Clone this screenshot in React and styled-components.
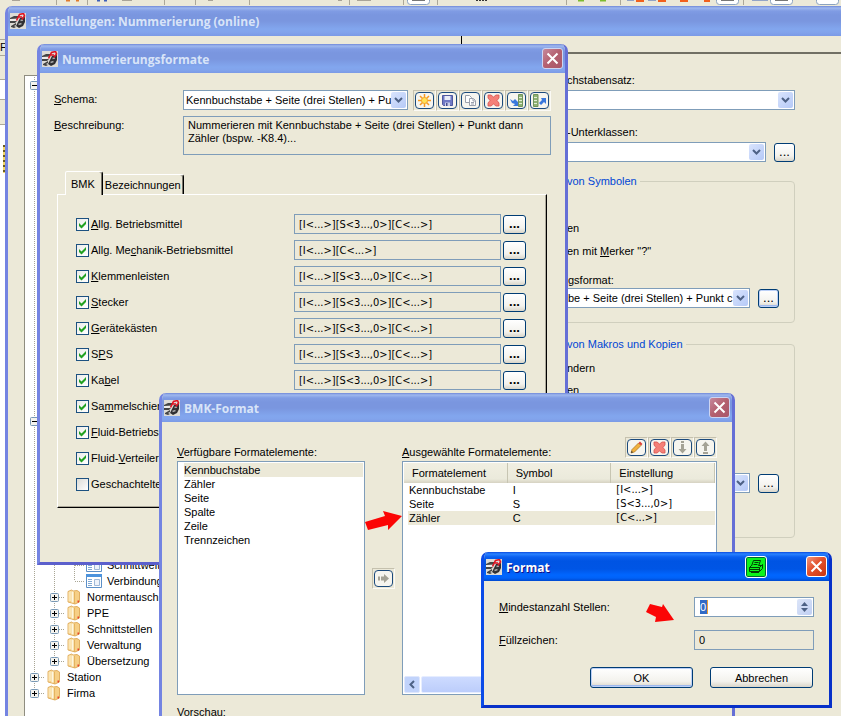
import React from "react"
import styled, { createGlobalStyle, css } from "styled-components"

const face = "#ece9d8"
const ink = "#000"
const fieldBorder = "#7f9db9"
const codeFont = `"DejaVu Sans Condensed", "Liberation Sans", sans-serif`

const GlobalStyle = createGlobalStyle`
  * { box-sizing: border-box; }
  html, body, #root { height: 100%; }
  body {
    margin: 0; overflow: hidden;
    background: ${face};
  }
  body, button, input, select, textarea {
    font-family: "Liberation Sans", Arial, sans-serif;
    font-size: 11px; line-height: 14px; color: ${ink};
  }
`

/* ---------- desktop and the application behind the dialogs ---------- */

const Desktop = styled.div`
  position: relative;
  height: 100vh;
  overflow: hidden;
  background: ${face};
`

const BackToolbar = styled.div`
  height: 6px;
  overflow: hidden;
  svg { display: block; }
`

const BackEdge = styled.div`
  display: flex; flex-direction: column;
  width: 6px; height: 100%;
  overflow: hidden;
`

const EdgePiece = styled.div`
  flex: none;
  height: ${props => props.$height}px;
  border-bottom: 1px solid #aca899;
  background: ${props => props.$bg || face};
  white-space: nowrap;
`

const EdgeCanvas = styled.div`
  flex: 1;
  padding: 20px 0 0 3px;
  background: #fff;
  &::before {
    content: ""; display: block;
    width: 3px; height: 28px;
    background: repeating-linear-gradient(#6b5c22 0 2px, #f3d766 2px 5px);
  }
`

/* ---------- windows ---------- */

const WindowFrame = styled.section`
  position: absolute;
  display: flex; flex-direction: column;
  overflow: hidden;
  background: ${face};
  border: 3px solid;
  border-color: ${props => (props.$active ? "#0a46de #0831c9 #0831c9 #0a4be8" : "#6f80de #656fd6 #5c60cc #7484e2")};
  border-top: 0;
  border-radius: 7px 7px 0 0;
`

const MainFrame = styled(WindowFrame)`
  top: 6px; left: 5px; right: 0; bottom: 0;
  border-right: 0; border-bottom: 0;
  border-radius: 7px 0 0 0;
`

const SchemeFrame = styled(WindowFrame)`
  top: 44px; left: 37px;
  width: 531px;
`

const PartsFrame = styled(WindowFrame)`
  top: 393px; left: 159px; bottom: 0;
  width: 576px;
  border-bottom: 0;
`

const FormatFrame = styled(WindowFrame)`
  top: 552px; left: 481px;
  width: 351px;
`

const TitleBar = styled.header`
  display: flex; align-items: center;
  flex: none;
  height: ${props => (props.$tall ? 30 : 29)}px;
  margin: 0 -3px;
  padding: 0 5px;
  background: ${props =>
    props.$active
      ? "linear-gradient(#0a4be0 0, #2a82ff 2px, #0a5ff0 5px, #0054e3 9px, #0055e5 17px, #0066ff 23px, #0062f8 26px, #0049cf 100%)"
      : "linear-gradient(#7088d8 0, #9fb8ee 2px, #809ce4 5px, #7a96df 9px, #7a96df 15px, #82a6ee 23px, #82a4ec 26px, #7b9ae6 100%)"};
`

const Title = styled.h1`
  flex: 1;
  margin: 2px 0 0 4px;
  font: bold 12px/16px "Open Sans", "Noto Sans", sans-serif;
  color: ${props => (props.$active ? "#fff" : "#d8e4f8")};
  text-shadow: ${props => (props.$active ? "1px 1px 0 #0f1089" : "none")};
  white-space: nowrap;
`

const CloseButton = styled.button`
  display: flex; align-items: center; justify-content: center;
  width: 21px; height: 21px;
  padding: 0;
  border: 1px solid #fff;
  border-radius: 3px;
  background: ${props =>
    props.$active
      ? "linear-gradient(135deg, #f0967c, #e2512d 45%, #c9360f)"
      : "linear-gradient(135deg, #c6899c, #b4606f 50%, #a9566a)"};
  ${props => !props.$active && css`border-color: #cdd5f2;`}
`

const PrintButton = styled.button`
  display: flex; align-items: center; justify-content: center;
  width: 22px; height: 22px;
  margin-right: 39px;
  padding: 0;
  border: 1px solid #fff;
  border-radius: 3px;
  background: #0cf31c;
  box-shadow: inset 0 0 0 1px #063;
`

/* ---------- common controls ---------- */

const Label = styled.label`
  white-space: nowrap;
`

const ComboBox = styled.div`
  display: flex;
  height: 20px;
  width: ${props => (props.$width ? props.$width + "px" : "auto")};
  padding: 1px;
  background: #fff;
  border: 1px solid ${fieldBorder};
  select {
    flex: 1; min-width: 0;
    padding: 0 0 0 1px;
    border: 0; outline: 0;
    background: transparent;
    appearance: none;
  }
`

const ComboArrow = styled.span`
  display: flex; align-items: center; justify-content: center;
  flex: none;
  width: 15px;
  border-radius: 2px;
  background: linear-gradient(135deg, #d9e4fd, #b5c9f7);
`

const PushButton = styled.button`
  height: 21px;
  padding: 0;
  border: 1px solid #003c74;
  border-radius: 3px;
  background: linear-gradient(#fff, #f3f2ed 70%, #d9d5c9);
  ${props => props.$default && css`
    box-shadow: inset 0 0 0 1px #bcd0f7, inset 0 -2px 0 #9db8ee;
  `}
`

const MoreButton = styled(PushButton)`
  flex: none;
  width: ${props => (props.$wide ? 23 : 21)}px;
  height: 19px;
  font-size: 13px;
  line-height: 12px;
  font-weight: ${props => (props.$wide ? "bold" : "normal")};
`

const ToolButtons = styled.div`
  display: flex;
  margin-left: auto;
`

const ToolCell = styled.span`
  display: flex;
  padding: 1px;
  border: 1px solid;
  border-color: #c5c1ae #fbfaf5 #fbfaf5 #c5c1ae;
`

const ToolButton = styled(PushButton)`
  display: flex; align-items: center; justify-content: center;
  width: 19px; height: 17px;
  border-color: #1b4a7c;
  border-radius: 4px;
  background: #f6f5ef;
`

const TextField = styled.input`
  width: 100%; height: 20px;
  padding: 0 4px;
  border: 1px solid ${fieldBorder};
  border-radius: 0;
  outline: 0;
  background: ${face};
`

const FormatCode = styled(TextField)`
  font-family: ${codeFont};
`

const WhiteBox = styled.div`
  height: 234px;
  border: 1px solid ${fieldBorder};
  background: #fff;
`

/* ---------- settings window ---------- */

const MainBody = styled.div`
  display: flex;
  flex: 1; min-height: 0;
`

const TreePane = styled.ul`
  flex: none;
  width: 425px;
  margin: 39px 12px 0 16px;
  padding: 1px 0 0;
  overflow: hidden;
  list-style: none;
  background: #fff;
  border: 1px solid #8f8d80;
  border-bottom: 0;
`

const TreeRow = styled.li`
  display: flex; align-items: center;
  height: 16px;
  white-space: nowrap;
  svg { display: block; flex: none; }
`

const TreeLabel = styled.span`
  padding-left: 2px;
`

const TreeIcon = styled.span`
  display: flex;
  width: 20px;
  padding-left: ${props => (props.$sheet ? 1 : 2)}px;
`

const dots = "#a8a594"

const TreeCell = styled.span`
  display: flex; align-items: center;
  flex: none;
  width: 20px; height: 16px;
  padding-left: 5px;
  background:
    ${props => props.$line ? `repeating-linear-gradient(${dots} 0 1px, transparent 1px 2px) 9px 0 / 1px ${props.$line === "end" ? 8 : 16}px no-repeat` : "none"},
    ${props => props.$tee ? `repeating-linear-gradient(to right, ${dots} 0 1px, transparent 1px 2px) 10px 8px / 10px 1px no-repeat` : "none"};
`

const SettingsPane = styled.div`
  flex: 1;
  padding-top: 16px;
  border-left: 1px solid ${ink};
`

const SettingsForm = styled.div`
  padding: 19px 46px 0 77px;
  border-top: 2px solid #716f64;
`

const Field = styled.div`
  display: flex; flex-direction: column;
  gap: ${props => (props.$tight ? 1 : 3)}px;
  margin-bottom: ${props => props.$gapAfter || 0}px;
`

const InlineControls = styled.div`
  display: flex; align-items: center;
  gap: 8px;
  ${ComboBox} { flex: 1; padding-left: 26px; }
`

const IndentLabel = styled(Label)`
  padding-left: 28px;
`

const Group = styled.fieldset`
  display: flex; flex-direction: column;
  height: ${props => props.$height}px;
  margin: 0 0 ${props => props.$gapAfter || 0}px;
  padding: 0 15px 0 0;
  border: 1px solid #d0cfbe;
  border-radius: 4px;
  legend {
    margin-left: 24px;
    padding: 0 3px;
    color: #0046d5;
  }
`

const GroupLine = styled.div`
  margin-bottom: ${props => props.$gapAfter || 0}px;
  padding-left: 27px;
`

/* ---------- numbering formats dialog ---------- */

const SchemeBody = styled.div`
  padding: 17px 14px 54px;
`

const SchemeRow = styled.div`
  display: flex;
  margin-bottom: 5px;
  & > ${Label} {
    flex: none;
    width: 129px;
    padding-top: 2px;
  }
`

const Description = styled.textarea`
  flex: 1;
  height: 39px;
  padding: 2px 4px;
  line-height: 13px;
  border: 1px solid ${fieldBorder};
  outline: 0;
  background: ${face};
  resize: none;
  overflow: hidden;
`

const TabList = styled.div`
  display: flex; align-items: flex-end;
  margin: 16px 0 0 11px;
`

const Tab = styled.button`
  height: ${props => (props.$selected ? 24 : 20)}px;
  margin-bottom: ${props => (props.$selected ? -1 : 0)}px;
  padding: 0 ${props => (props.$selected ? 7 : 2)}px 0 ${props => (props.$selected ? 5 : 2)}px;
  border: solid;
  border-width: 1px 1px 0 1px;
  border-color: #fff ${ink} transparent #fff;
  border-radius: 2px 3px 0 0;
  background: ${face};
  box-shadow: inset -1px 0 0 #77756a;
  ${props => !props.$selected && css`border-left: 0;`}
`

const TabPanel = styled.div`
  margin: 0 4px 0 3px;
  padding: 16px 20px 10px 18px;
  border: 1px solid;
  border-color: #fff ${ink} ${ink} #fff;
  box-shadow: inset -1px -1px 0 #aca899;
`

const FormatRow = styled.div`
  display: grid;
  grid-template-columns: 218px 1fr 25px;
  align-items: center;
  height: 26px;
  ${MoreButton} { margin-left: 2px; }
`

const CheckLabel = styled.label`
  display: flex; align-items: center;
  gap: 2px;
  white-space: nowrap;
`

const tick = "data:image/svg+xml,%3Csvg xmlns='http://www.w3.org/2000/svg' width='11' height='11'%3E%3Cpath d='M2 4v3l2.5 2.5L9 5V2L4.5 6.5z' fill='%2321a121'/%3E%3C/svg%3E"

const CheckBox = styled.input`
  width: 13px; height: 13px;
  margin: 0;
  border: 1px solid #1c5180;
  background: linear-gradient(135deg, #dcdcd7, #fff);
  appearance: none;
  &:checked { background: url("${tick}") no-repeat, linear-gradient(135deg, #ececea, #fff); }
`

/* ---------- BMK format dialog ---------- */

const PartsBody = styled.div`
  padding: 15px 15px 0;
`

const PartsGrid = styled.div`
  display: grid;
  grid-template-columns: 188px 37px 1fr;
  grid-template-rows: 24px 234px;
  margin-bottom: 10px;
`

const PartsHead = styled.div`
  display: flex; align-items: flex-start;
  ${Label} { padding-top: 8px; }
`

const PartsMiddle = styled.div`
  grid-column: 2; grid-row: 2;
  display: flex; align-items: center; justify-content: center;
`

const ListBox = styled.ul`
  height: 234px;
  margin: 0;
  padding: 1px 1px 1px 6px;
  list-style: none;
  border: 1px solid ${fieldBorder};
  background: #fff;
`

const ListItem = styled.li`
  height: 14px;
  background: ${props => (props.$selected ? face : "transparent")};
`

const TableBox = styled(WhiteBox)`
  display: flex; flex-direction: column; justify-content: space-between;
  padding: 1px;
  overflow: hidden;
`

const PartsTable = styled.table`
  width: 100%;
  border-spacing: 0;
  table-layout: fixed;
  th {
    height: 20px;
    padding: 0 0 0 8px;
    text-align: left; font-weight: normal;
    background: linear-gradient(#f1efe2, #ebeadb 80%, #d6d2c2);
    border-right: 1px solid #c7c5b2;
  }
  td { height: 14px; padding: 0 0 0 5px; }
  td:first-child { border-left: 4px solid #fff; padding-left: 1px; }
  td:last-child { font-family: ${codeFont}; }
`

const PartRow = styled.tr`
  background: ${props => (props.$selected ? face : "transparent")};
`

const ScrollBar = styled.div`
  display: flex;
  height: 17px;
  gap: 1px;
`

const ScrollButton = styled.button`
  display: flex; align-items: center; justify-content: center;
  width: 16px;
  padding: 0;
  border: 1px solid #dfe7fc;
  border-radius: 2px;
  background: #c1d3fb;
`

const ScrollThumb = styled.div`
  width: 180px;
  border: 1px solid #e6edff;
  border-radius: 2px;
  background: linear-gradient(#cddbff, #bccdfb);
`

/* ---------- format dialog ---------- */

const FormatForm = styled.form`
  display: grid;
  grid-template-columns: 1fr 120px;
  align-items: center;
  row-gap: 13px;
  padding: 16px 15px 17px;
`

const SpinBox = styled.div`
  display: flex;
  height: 20px;
  padding: 1px;
  background: #fff;
  border: 1px solid ${fieldBorder};
  input {
    flex: 1; min-width: 0;
    padding: 0 0 0 4px;
    border: 0; outline: 0;
    color: #fff;
    background: linear-gradient(to right, #316ac5 7px, #f0a030 7px 8px, transparent 8px) 4px 1px / 8px 14px no-repeat;
  }
`

const SpinArrows = styled.span`
  display: flex; flex-direction: column; align-items: center; justify-content: space-evenly;
  width: 15px;
  border-radius: 2px;
  background: linear-gradient(135deg, #dce5f8, #c0cff3);
`

const FormatButtons = styled.div`
  grid-column: 1 / -1;
  display: flex; justify-content: flex-end;
  gap: 17px;
  padding: 4px 1px 0 0;
  ${PushButton} { width: 103px; }
`

/* ---------- red pointers ---------- */

const Pointer = styled.svg`
  position: absolute;
  top: ${props => props.$top}px; left: ${props => props.$left}px;
  fill: #fb0505;
`

/* ---------- drawings ---------- */

const AppIcon = () => (
  <svg width="16" height="16" viewBox="0 0 16 16" aria-hidden="true">
    <path d="M0 0h16v16H0z" fill="#dddbd5" />
    <path d="M0 5l4-2h5L8 5.500 0 6zM0 8h7l-2 2H0zM1 13l5-3v2l-2 1 2 1-2 1-3-1z" fill="#444" />
    <path d="M0 7h7" stroke="#fff" />
    <path d="M10 5l5-1v5l-2 4-4 2-3-2 2-4z" fill="#2f2f32" />
    <path d="M10.500 7.500l2.500-.5M8.500 11.500l3-1" stroke="#a9a9a9" strokeWidth="1.500" />
    <path d="M6.500 7.500L9.500 1.500l4-1 1 2.500-2.500 3.500M9 4h3" fill="none" stroke="#df1220" strokeWidth="1.600" />
  </svg>
)

const Cross = () => (
  <svg width="13" height="13" viewBox="0 0 13 13" aria-hidden="true">
    <path d="M1.500 1.500l10 10M11.500 1.500l-10 10" stroke="#fff" strokeWidth="2" />
  </svg>
)

const Chevron = () => (
  <svg width="9" height="6" viewBox="0 0 9 6" aria-hidden="true">
    <path d="M1 1l3.500 3.500L8 1" fill="none" stroke="#4d6185" strokeWidth="2" />
  </svg>
)

const PrinterIcon = () => (
  <svg width="16" height="15" viewBox="0 0 16 15" fill="none" stroke="#033b05" aria-hidden="true">
    <path d="M3.500 7l2-5.500h7l-2 5.500M6.500 3.500h4M5.500 5.500h4" />
    <path d="M1.500 8.500h10v4h-10zM1.500 8.500l2-2M11.500 8.500l3-3v4l-3 3M3 13.500h8M11 6.500h2M2 10.500h9" />
  </svg>
)

const toolIcons = {
  star: (
    <>
      <path d="M6.500 0v13M0 6.500h13M2 2l9 9M11 2l-9 9" stroke="#f79a20" strokeWidth="1.500" />
      <circle cx="6.500" cy="6.500" r="3" fill="#ffe25a" stroke="#f3a62c" />
    </>
  ),
  save: (
    <>
      <path d="M1.500 1.500h10v10h-9l-1-1z" fill="#6f79c4" stroke="#5059a0" />
      <path d="M3.500 2h6v4h-6z" fill="#e9ecf8" />
      <path d="M4 8.500h5V12H4z" fill="#c9cee9" />
      <path d="M5 9h1.500v3H5z" fill="#444d8d" />
    </>
  ),
  copy: (
    <g fill="#fff" stroke="#9aa0ac">
      <path d="M1.500 1.500h4l2 2v5h-6z" />
      <path d="M5.500 4.500h4l2 2v5h-6zM9 5v2h2M7 8.500h3M7 10h3" />
    </g>
  ),
  remove: (
    <path d="M1 1h3l2.500 2L9 1h3v3L10 6.500 12 9v3H9L6.500 10 4 12H1V9l2-2.500L1 4z" fill="#f48078" stroke="#d9544f" strokeWidth=".8" />
  ),
  load: (
    <>
      <path d="M8.500 .500h4v12h-4z" fill="#8fb274" stroke="#72945b" />
      <path d="M9 3.500h3M9 6.500h3M9 9.500h3" stroke="#e2eed6" />
      <path d="M0 5l3 2 2-2 3 3v4H3l2-2-3-1z" fill="#3a78dc" />
    </>
  ),
  store: (
    <>
      <path d="M.500.500H5v12H.500z" fill="#8fb274" stroke="#72945b" />
      <path d="M1 3.500h3M1 6.500h3M1 9.500h3" stroke="#e2eed6" />
      <path d="M8 4h5v6l-2-2-3 3-2-2 3-3z" fill="#3a78dc" />
    </>
  ),
  pencil: (
    <>
      <path d="M1 12l1-3.500L8.500 2l2.500 2.500L4.500 11z" fill="#f2b13e" stroke="#a8741c" strokeWidth=".7" />
      <path d="M8.500 2L10 .500 12.500 3 11 4.500z" fill="#e0403a" />
      <path d="M1 12l.700-2.200L3 11.300z" fill="#333" />
    </>
  ),
  down: <path d="M5 0h3v2H5zM5 3h3v5h2.500l-4 4.500-4-4.500H5z" fill="#a5a396" />,
  up: <path d="M6.500.500l4 4.500H8v5H5V5H2.500zM4 11h5v2H4z" fill="#a5a396" />,
  right: <path d="M1 4.500h2v4H1zM4 4.500h3V2l5 4.500-5 4.500V8.500H4z" fill="#a5a396" />,
}

const Tool = ({ icon, label }) => (
  <ToolCell>
    <ToolButton type="button" aria-label={label}>
      <svg width="13" height="13" viewBox="0 0 13 13" fill="none" aria-hidden="true">
        {toolIcons[icon]}
      </svg>
    </ToolButton>
  </ToolCell>
)

const FolderIcon = () => (
  <svg width="14" height="16" viewBox="0 0 14 16" aria-hidden="true">
    <path d="M1 2.500L4.500 1l1.500 1 4-.5 2.500 1.500v10L8 15l-7-2z" fill="#f6cf85" stroke="#d9a047" strokeWidth=".8" />
    <path d="M1.500 3L4 2v10l-2.500.5z" fill="#fbe5b3" />
    <path d="M5.500 2.500v11" stroke="#fdf6e0" strokeWidth="2" />
    <path d="M7.500 3v11.500" stroke="#d9a047" strokeWidth=".6" />
    <path d="M10.500 11.500H12v2h-1.500z" fill="#e8402c" />
  </svg>
)

const SheetIcon = () => (
  <svg width="16" height="14" viewBox="0 0 16 14" aria-hidden="true">
    <path d="M.500.500h15v13H.500z" fill="#fff" stroke="#5b8fc7" />
    <path d="M0 0h16v3H0z" fill="#4c93dd" />
    <path d="M2 5.500h4M2 7.500h4M2 9.500h4M2 11.500h4" stroke="#7fa8d3" />
    <path d="M8.500 5.500h5v6h-5z" fill="#eef3fa" stroke="#9fb9d8" />
  </svg>
)

const Toggle = ({ open }) => (
  <svg width="9" height="9" viewBox="0 0 9 9" aria-hidden="true">
    <rect x=".5" y=".5" width="8" height="8" rx="1" fill="#f4f3ee" stroke="#7898b5" />
    <path d={open ? "M2 4.500h5" : "M2 4.500h5M4.500 2v5"} stroke="#000" />
  </svg>
)

/* ---------- data ---------- */

const hidden = count => Array.from({ length: count }, () => ({ depth: 0 }))

const treeItems = [
  { depth: 1, open: true },
  ...hidden(20),
  { depth: 1, open: true },
  ...hidden(8),
  { depth: 3, name: "Schnittweite" },
  { depth: 3, name: "Verbindungen", last: true },
  { depth: 2, name: "Normentausch" },
  { depth: 2, name: "PPE" },
  { depth: 2, name: "Schnittstellen" },
  { depth: 2, name: "Verwaltung" },
  { depth: 2, name: "Übersetzung", last: true },
  { depth: 1, name: "Station" },
  { depth: 1, name: "Firma", last: true },
]

const full = "[I<...>][S<3...,0>][C<...>]"

const formats = [
  { name: <><u>A</u>llg. Betriebsmittel</>, value: full },
  { name: <>Allg. Me<u>c</u>hanik-Betriebsmittel</>, value: "[I<...>][C<...>]" },
  { name: <><u>K</u>lemmenleisten</>, value: full },
  { name: <><u>S</u>tecker</>, value: full },
  { name: <><u>G</u>erätekästen</>, value: full },
  { name: <>S<u>P</u>S</>, value: full },
  { name: <>Ka<u>b</u>el</>, value: full },
  { name: <>Sa<u>m</u>melschienen</> },
  { name: <><u>F</u>luid-Betriebsmittel</> },
  { name: <>Fluid-<u>V</u>erteiler</> },
  { name: <>Geschachtelte</>, off: true },
]

const available = ["Kennbuchstabe", "Zähler", "Seite", "Spalte", "Zeile", "Trennzeichen"]

const chosen = [
  ["Kennbuchstabe", "I", "[I<...>]"],
  ["Seite", "S", "[S<3...,0>]"],
  ["Zähler", "C", "[C<...>]"],
]

/* ---------- parts ---------- */

const Combo = ({ id, value, width, label }) => (
  <ComboBox $width={width}>
    <select id={id} aria-label={label}>
      <option>{value}</option>
    </select>
    <ComboArrow><Chevron /></ComboArrow>
  </ComboBox>
)

const TitleRow = ({ title, active, tall, closable, children }) => (
  <TitleBar $active={active} $tall={tall}>
    <AppIcon />
    <Title $active={active}>{title}</Title>
    {children}
    {closable && (
      <CloseButton type="button" aria-label="Schließen" $active={active}><Cross /></CloseButton>
    )}
  </TitleBar>
)

const TreeItem = ({ item }) => {
  const { depth, name, open, last } = item
  const toggle = depth === 1 || depth === 2
  return (
    <TreeRow>
      {depth === 0 && <TreeCell $line="full" />}
      {depth > 1 && <TreeCell $line="full" />}
      {depth > 2 && <TreeCell $line="full" />}
      {depth > 0 && (
        <TreeCell $line={last ? "end" : "full"} $tee>
          {toggle && <Toggle open={open} />}
        </TreeCell>
      )}
      {name && (
        <>
          <TreeIcon $sheet={depth === 3}>{depth === 3 ? <SheetIcon /> : <FolderIcon />}</TreeIcon>
          <TreeLabel>{name}</TreeLabel>
        </>
      )}
    </TreeRow>
  )
}

const Backdrop = () => (
  <>
    <BackToolbar>
      <svg width="841" height="6" viewBox="0 0 841 6" aria-hidden="true">
        <path d="M56.500 0v5M87.500 0v5M164.500 0v5M195.500 0v5M249.500 0v5M349.500 0v5M403.500 0v5M437.500 0v5M566.500 0v5M620.500 0v5M743.500 0v5" stroke="#aca899" />
        <path d="M12 0h8M122 0h10M208 0h5M338 0h4M357 0h14" stroke="#a9a498" strokeWidth="2" />
        <path d="M66 0h4M76 0h3" stroke="#e07a2c" strokeWidth="3" />
        <path d="M97 0h3M104 0h3" stroke="#3c5fb8" strokeWidth="3" />
        <path d="M476 0h12" stroke="#333" strokeWidth="2" strokeDasharray="2 1" />
        <path d="M578 0h6M600 0h6" stroke="#7dbb2f" strokeWidth="3" />
        <path d="M636 0h8M658 0h8M680 0h8M704 0h6" stroke="#f2601c" strokeWidth="4" />
        <path d="M627 0h7M648 0h8M752 0h16" stroke="#93a4c6" strokeWidth="2" />
        <g fill="#fff" stroke="#8ba3c0">
          <rect x="407.500" y="-10" width="22" height="14.500" rx="3" />
          <rect x="716.500" y="-10" width="22" height="14.500" rx="3" />
          <rect x="770.500" y="-10" width="22" height="14.500" rx="3" />
          <rect x="816.500" y="-10" width="22" height="14.500" rx="3" />
        </g>
        <path d="M412 0h13M721 0h13M775 0h13" stroke="#777" strokeWidth="2" />
      </svg>
    </BackToolbar>
    <BackEdge>
      <EdgePiece $height={34} />
      <EdgePiece $height={16}>F</EdgePiece>
      <EdgePiece $height={24} />
      <EdgePiece $height={20} $bg="#fff" />
      <EdgePiece $height={25} />
      <EdgeCanvas />
    </BackEdge>
  </>
)

const SettingsWindow = () => (
  <MainFrame>
    <TitleRow title="Einstellungen: Nummerierung (online)" tall />
    <MainBody>
      <TreePane>
        {treeItems.map((item, i) => <TreeItem key={i} item={item} />)}
      </TreePane>
      <SettingsPane>
        <SettingsForm>
          <Field $gapAfter={15}>
            <IndentLabel htmlFor="letters">chstabensatz:</IndentLabel>
            <Combo id="letters" value="" />
          </Field>
          <Field $gapAfter={12}>
            <IndentLabel htmlFor="subclasses">-Unterklassen:</IndentLabel>
            <InlineControls>
              <Combo id="subclasses" value="" />
              <MoreButton type="button">...</MoreButton>
            </InlineControls>
          </Field>
          <Group $height={149} $gapAfter={14}>
            <legend>von Symbolen</legend>
            <GroupLine $gapAfter={19}>&nbsp;</GroupLine>
            <GroupLine $gapAfter={9}>en</GroupLine>
            <GroupLine $gapAfter={15}>en mit <u>M</u>erker "?"</GroupLine>
            <Field $tight>
              <IndentLabel htmlFor="format">gsformat:</IndentLabel>
              <InlineControls>
                <Combo id="format" value="be + Seite (drei Stellen) + Punkt c" />
                <MoreButton type="button" $default>...</MoreButton>
              </InlineControls>
            </Field>
          </Group>
          <Group $height={201}>
            <legend>von Makros und Kopien</legend>
            <GroupLine $gapAfter={10} />
            <GroupLine $gapAfter={8}>ndern</GroupLine>
            <GroupLine $gapAfter={76}>en</GroupLine>
            <InlineControls>
              <Combo value="" label="Format" />
              <MoreButton type="button">...</MoreButton>
            </InlineControls>
          </Group>
        </SettingsForm>
      </SettingsPane>
    </MainBody>
  </MainFrame>
)

const SchemeDialog = () => (
  <SchemeFrame>
    <TitleRow title="Nummerierungsformate" closable />
    <SchemeBody>
      <SchemeRow>
        <Label htmlFor="scheme"><u>S</u>chema:</Label>
        <Combo id="scheme" width={225} value="Kennbuchstabe + Seite (drei Stellen) + Pu" />
        <ToolButtons>
          <Tool icon="star" label="Neu" />
          <Tool icon="save" label="Speichern" />
          <Tool icon="copy" label="Kopieren" />
          <Tool icon="remove" label="Löschen" />
          <Tool icon="load" label="Importieren" />
          <Tool icon="store" label="Exportieren" />
        </ToolButtons>
      </SchemeRow>
      <SchemeRow>
        <Label htmlFor="description"><u>B</u>eschreibung:</Label>
        <Description
          id="description"
          readOnly
          value={"Nummerieren mit Kennbuchstabe + Seite (drei Stellen) + Punkt dann\nZähler (bspw. -K8.4)..."}
        />
      </SchemeRow>
      <TabList role="tablist">
        <Tab type="button" role="tab" aria-selected="true" $selected>BMK</Tab>
        <Tab type="button" role="tab" aria-selected="false">Bezeichnungen</Tab>
      </TabList>
      <TabPanel role="tabpanel">
        {formats.map((format, i) => (
          <FormatRow key={i}>
            <CheckLabel>
              <CheckBox type="checkbox" defaultChecked={!format.off} />
              <span>{format.name}</span>
            </CheckLabel>
            {format.value && (
              <>
                <FormatCode readOnly aria-label="Format" value={format.value} />
                <MoreButton type="button" $wide>...</MoreButton>
              </>
            )}
          </FormatRow>
        ))}
      </TabPanel>
    </SchemeBody>
  </SchemeFrame>
)

const PartsDialog = () => (
  <PartsFrame>
    <TitleRow title="BMK-Format" closable />
    <PartsBody>
      <PartsGrid>
        <PartsHead>
          <Label as="span" id="available"><u>V</u>erfügbare Formatelemente:</Label>
        </PartsHead>
        <span />
        <PartsHead>
          <Label as="span" id="chosen"><u>A</u>usgewählte Formatelemente:</Label>
          <ToolButtons>
            <Tool icon="pencil" label="Bearbeiten" />
            <Tool icon="remove" label="Entfernen" />
            <Tool icon="down" label="Nach unten" />
            <Tool icon="up" label="Nach oben" />
          </ToolButtons>
        </PartsHead>
        <ListBox role="listbox" aria-labelledby="available">
          {available.map((name, i) => (
            <ListItem key={name} role="option" aria-selected={i === 0} $selected={i === 0}>{name}</ListItem>
          ))}
        </ListBox>
        <PartsMiddle>
          <Tool icon="right" label="Übernehmen" />
        </PartsMiddle>
        <TableBox>
          <PartsTable aria-labelledby="chosen">
            <thead>
              <tr>
                <th>Formatelement</th>
                <th>Symbol</th>
                <th>Einstellung</th>
              </tr>
            </thead>
            <tbody>
              {chosen.map((cells, i) => (
                <PartRow key={i} $selected={i === 2}>
                  {cells.map(cell => <td key={cell}>{cell}</td>)}
                </PartRow>
              ))}
            </tbody>
          </PartsTable>
          <ScrollBar>
            <ScrollButton type="button" aria-label="Nach links">
              <svg width="6" height="9" viewBox="0 0 6 9" aria-hidden="true">
                <path d="M5 1L1.500 4.500 5 8" fill="none" stroke="#4d6185" strokeWidth="2" />
              </svg>
            </ScrollButton>
            <ScrollThumb />
          </ScrollBar>
        </TableBox>
      </PartsGrid>
      <Label as="span"><u>V</u>orschau:</Label>
    </PartsBody>
  </PartsFrame>
)

const FormatDialog = () => (
  <FormatFrame $active>
    <TitleRow title="Format" active closable>
      <PrintButton type="button" aria-label="Drucken"><PrinterIcon /></PrintButton>
    </TitleRow>
    <FormatForm>
      <Label htmlFor="digits"><u>M</u>indestanzahl Stellen:</Label>
      <SpinBox>
        <input id="digits" type="text" defaultValue="0" />
        <SpinArrows>
          <svg width="7" height="4" viewBox="0 0 7 4" aria-hidden="true"><path d="M0 4l3.500-4L7 4z" fill="#4d6185" /></svg>
          <svg width="7" height="4" viewBox="0 0 7 4" aria-hidden="true"><path d="M0 0l3.500 4L7 0z" fill="#4d6185" /></svg>
        </SpinArrows>
      </SpinBox>
      <Label htmlFor="filler"><u>F</u>üllzeichen:</Label>
      <TextField id="filler" readOnly value="0" />
      <FormatButtons>
        <PushButton type="button" $default>OK</PushButton>
        <PushButton type="button">Abbrechen</PushButton>
      </FormatButtons>
    </FormatForm>
  </FormatFrame>
)

const App = () => (
  <>
    <GlobalStyle />
    <Desktop>
      <Backdrop />
      <SettingsWindow />
      <SchemeDialog />
      <PartsDialog />
      <FormatDialog />
      <Pointer $top={510} $left={365} width="38" height="21" aria-hidden="true">
        <path d="M0 12l20-6-2-5 19 5-14 14v-5L3 20z" />
      </Pointer>
      <Pointer $top={603} $left={646} width="29" height="20" aria-hidden="true">
        <path d="M4 1l12 3 1-3 11 16-19 2 1-5-10-5z" />
      </Pointer>
    </Desktop>
  </>
)

export default App
